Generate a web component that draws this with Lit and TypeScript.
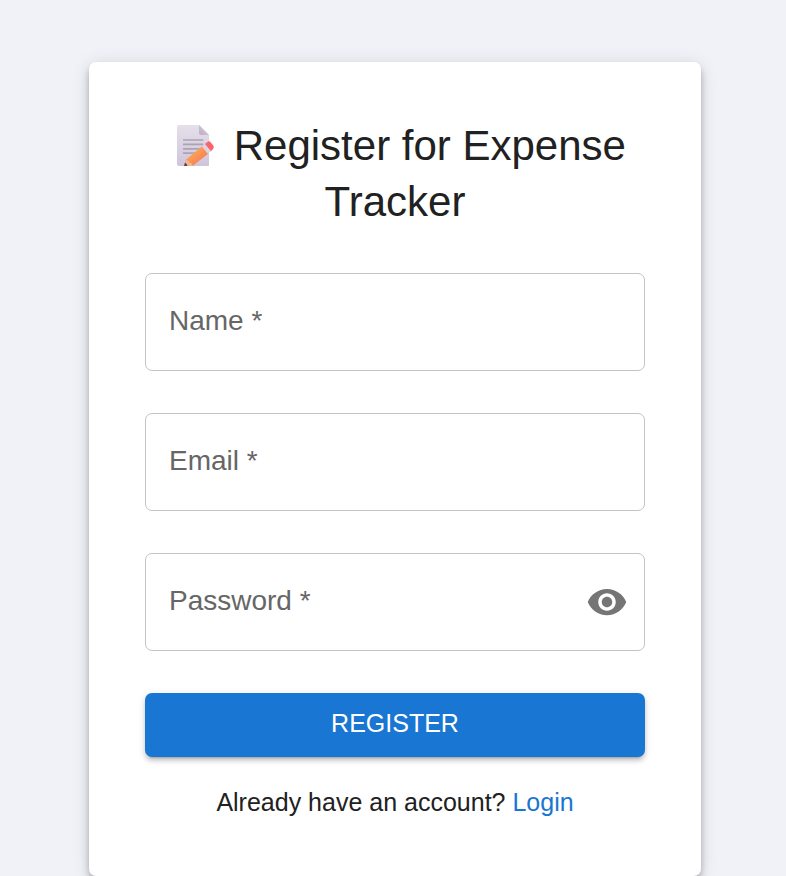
import { LitElement, html, css } from "lit";
import { customElement, property, state } from "lit/decorators.js";

@customElement("text-field")
class TextField extends LitElement {
  @property() label = "";
  @property() type = "text";
  @state() private value = "";
  @state() private revealed = false;

  static styles = css`
    :host {
      display: block;
    }
    .field {
      position: relative;
      display: flex;
      align-items: center;
      box-sizing: border-box;
      height: 98px;
      padding: 0 16px 0 24px;
      border: 1px solid #c4c4c4;
      border-radius: 7px;
    }
    .field:focus-within {
      border-color: #1976d2;
    }
    .label {
      position: absolute;
      left: 23px;
      top: 27px;
      font-size: 28px;
      line-height: 40px;
      color: #666;
      pointer-events: none;
    }
    .label.filled,
    .field:focus-within .label {
      top: -12px;
      left: 16px;
      padding: 0 8px;
      font-size: 21px;
      line-height: 24px;
      background: #fff;
    }
    .input {
      flex: 1;
      min-width: 0;
      height: 40px;
      padding: 0;
      border: 0;
      outline: 0;
      background: none;
      font: inherit;
      font-size: 28px;
      color: #212121;
    }
    .toggle {
      display: flex;
      padding: 0;
      border: 0;
      background: none;
      color: #757575;
      cursor: pointer;
    }
    .eye {
      width: 42px;
      height: 42px;
      fill: currentColor;
    }
  `;

  render() {
    const secret = this.type === "password";
    return html`
      <div class="field">
        <label class="label ${this.value ? "filled" : ""}" for="input">${this.label} *</label>
        <input
          class="input"
          id="input"
          type=${secret && this.revealed ? "text" : this.type}
          required
          .value=${this.value}
          @input=${(e: Event) => (this.value = (e.target as HTMLInputElement).value)}
        />
        ${secret
          ? html`<button
              class="toggle"
              type="button"
              aria-label="Toggle password visibility"
              @click=${() => (this.revealed = !this.revealed)}
            >
              <svg class="eye" viewBox="0 0 24 24" aria-hidden="true">
                <path
                  d="M12 4.5C7 4.5 2.73 7.61 1 12c1.73 4.39 6 7.5 11 7.5s9.27-3.11 11-7.5c-1.73-4.39-6-7.5-11-7.5M12 17c-2.76 0-5-2.24-5-5s2.24-5 5-5 5 2.24 5 5-2.24 5-5 5m0-8c-1.66 0-3 1.34-3 3s1.34 3 3 3 3-1.34 3-3-1.34-3-3-3"
                />
              </svg>
            </button>`
          : null}
      </div>
    `;
  }
}

@customElement("app-root")
class AppRoot extends LitElement {
  static styles = css`
    :host {
      display: block;
      box-sizing: border-box;
      min-height: 100vh;
      padding: 62px 24px 0 28px;
      background: #f0f2f7;
      font-family: Arial, "Liberation Sans", sans-serif;
      color: #212121;
    }
    .card {
      box-sizing: border-box;
      max-width: 612px;
      margin: 0 auto;
      padding: 56px;
      border-radius: 7px;
      background: #fff;
      box-shadow:
        0 4px 7px -2px rgba(0, 0, 0, 0.2),
        0 7px 9px 0 rgba(0, 0, 0, 0.14),
        0 2px 18px 0 rgba(0, 0, 0, 0.12);
    }
    .title {
      margin: 0 0 43px;
      font-size: 42px;
      font-weight: 400;
      line-height: 56px;
      text-align: center;
    }
    .memo {
      width: 42px;
      height: 42px;
      margin: 0 5px 0 11px;
      vertical-align: -6px;
    }
    .fields {
      display: grid;
      gap: 42px;
    }
    .submit {
      display: block;
      width: 100%;
      height: 64px;
      margin: 42px 0 28px;
      padding: 0 0 4px;
      border: 0;
      border-radius: 7px;
      background: #1976d2;
      color: #fff;
      font: inherit;
      font-size: 25px;
      text-transform: uppercase;
      cursor: pointer;
      box-shadow:
        0 5px 2px -4px rgba(0, 0, 0, 0.2),
        0 4px 4px 0 rgba(0, 0, 0, 0.14),
        0 2px 9px 0 rgba(0, 0, 0, 0.12);
    }
    .account {
      margin: 0;
      font-size: 25px;
      line-height: 35px;
      text-align: center;
    }
    .link {
      color: #1976d2;
      text-decoration: none;
    }
  `;

  render() {
    return html`
      <main class="card">
        <h1 class="title">
          <svg class="memo" viewBox="0 0 42 42" aria-hidden="true">
            <defs>
              <linearGradient id="paper" x1="0" y1="0" x2="0" y2="1">
                <stop offset="0" stop-color="#e5dfea" />
                <stop offset="1" stop-color="#d0c5db" />
              </linearGradient>
              <linearGradient id="fold" x1="0" y1="1" x2="1" y2="0">
                <stop offset="0" stop-color="#b9afc2" />
                <stop offset="1" stop-color="#d8d0df" />
              </linearGradient>
              <linearGradient id="pencil" x1="0" y1="0" x2="1" y2="1">
                <stop offset="0.2" stop-color="#ffae52" />
                <stop offset="0.9" stop-color="#f57356" />
              </linearGradient>
            </defs>
            <path fill="url(#paper)" d="M4 1H24L34 11V42H4Q2 42 2 40V3Q2 1 4 1Z" />
            <path fill="url(#fold)" d="M24 1L34 11H26Q24 11 24 9Z" />
            <path stroke="#aaa4b2" stroke-width="1.7" d="M8 16H28.3M8 20.4H28.3M8 24.8H26M8 29.2H20" />
            <path fill="url(#pencil)" d="M10.5 36L27.5 22L33.5 29.5L17.5 42H9.5Z" />
            <path fill="#f1b692" d="M10.5 36Q14 35.5 14 38.5Q17.5 38.5 17.5 42H9Z" />
            <path fill="#574155" d="M10 38.5Q12 39.5 12.5 42H9Z" />
            <path fill="#ddd4e8" d="M27 22.5L30 20L36 27.2L32.8 29.8Z" />
            <path fill="#fa6464" d="M30 20L32.5 17.9Q34 16.7 35.4 18L38.4 21.8Q39.4 23.4 38 25L36 27.2Z" />
          </svg>
          Register for Expense Tracker
        </h1>
        <form @submit=${(e: Event) => e.preventDefault()}>
          <div class="fields">
            <text-field label="Name"></text-field>
            <text-field label="Email" type="email"></text-field>
            <text-field label="Password" type="password"></text-field>
          </div>
          <button class="submit" type="submit">Register</button>
        </form>
        <p class="account">Already have an account? <a class="link" href="#login">Login</a></p>
      </main>
    `;
  }
}
